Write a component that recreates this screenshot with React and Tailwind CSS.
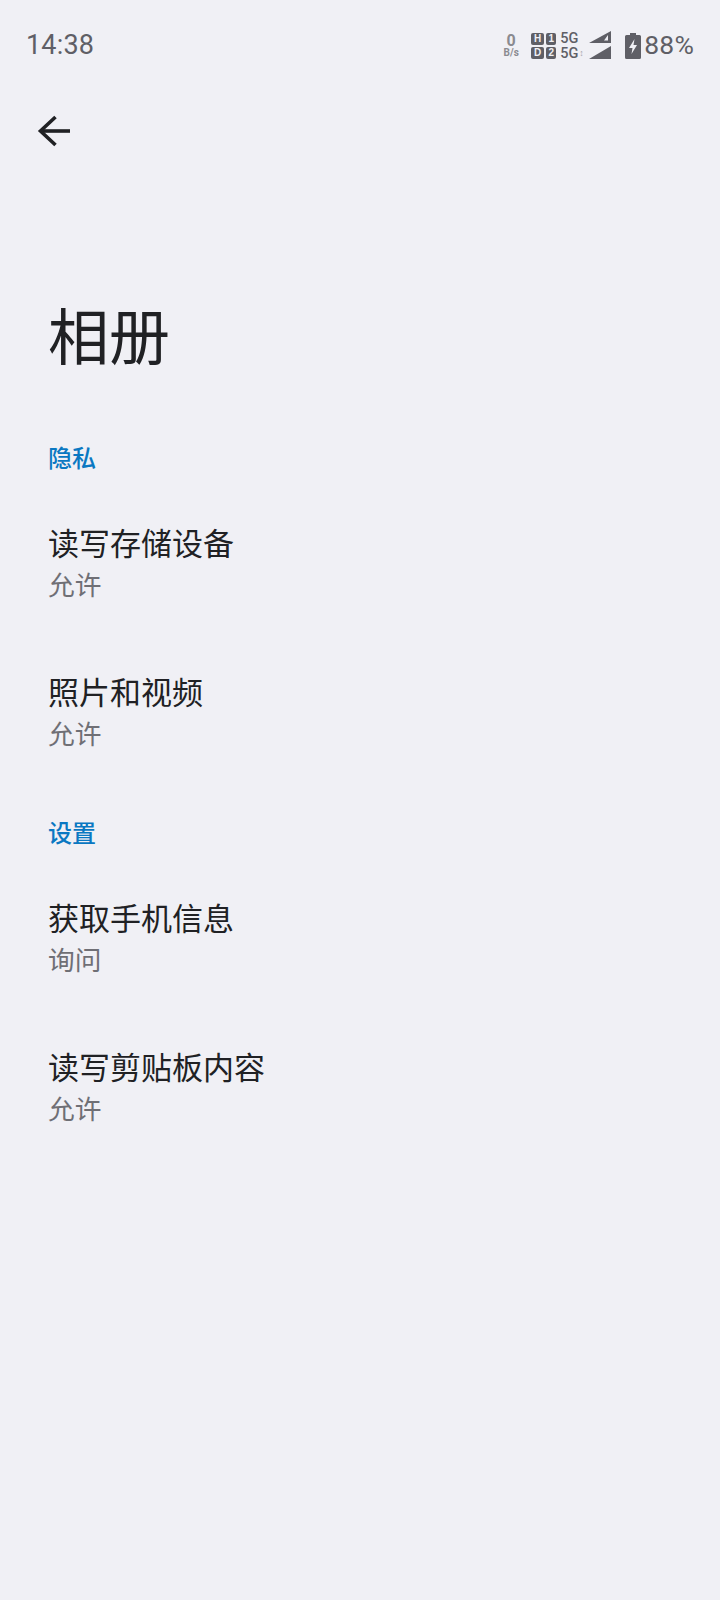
const cjk = { fontFamily: '"Noto Sans CJK SC", sans-serif' };

function Sim({ a, wide }) {
  return (
    <div className={`relative ${wide ? 'w-[13px]' : 'w-[10px]'} h-[12px] bg-[#5f5f66] rounded-[2px] flex items-center justify-center`}>
      <span className="text-[#f0f0f5] text-[10px] font-bold leading-none" style={{ fontFamily: '"Liberation Sans", sans-serif' }}>{a}</span>
    </div>
  );
}

function StatusBar() {
  return (
    <div className="h-[89px] pt-[2px] pl-[26px] pr-[26px] flex items-center justify-between text-[#5f5f66]" style={{ fontFamily: 'Roboto, sans-serif' }}>
      <span className="text-[27px] leading-none tracking-[0.2px] text-[#5f5f66]">14:38</span>
      <div className="flex items-center">
        <div className="flex flex-col items-center w-[20px] mr-[10px] leading-none">
          <span className="text-[16px] font-bold leading-[15px] text-[#8a8a90]">0</span>
          <span className="text-[10px] font-bold leading-[10px] text-[#8a8a90]">B/s</span>
        </div>
        <div className="grid grid-cols-[13px_10px] gap-[2px] mr-[4px]">
          <Sim a="H" wide /><Sim a="1" /><Sim a="D" wide /><Sim a="2" />
        </div>
        <div className="flex flex-col text-[14.5px] leading-[15px] font-medium w-[28px] mr-[1px]">
          <span>5G</span>
          <span className="flex items-center">5G<span className="text-[9px] text-[#a5a5aa] leading-none ml-[1px]">↕</span></span>
        </div>
        <svg width="24" height="30" viewBox="0 0 24 30" className="mr-[12px]" fill="#5f5f66">
          <path d="M0 12 L22 0 V12 Z M19 4 V9.5 H15 Z" fillRule="evenodd" />
          <path d="M0 28 L22 15 V28 Z" />
        </svg>
        <svg width="16" height="26" viewBox="0 0 16 26" className="mr-[3px]">
          <path d="M5 0 H11 V2 H14.5 A1.5 1.5 0 0 1 16 3.5 V24.5 A1.5 1.5 0 0 1 14.5 26 H1.5 A1.5 1.5 0 0 1 0 24.5 V3.5 A1.5 1.5 0 0 1 1.5 2 H5 Z" fill="#5f5f66" />
          <path d="M9.5 6 L4 15 H7.5 L6.5 21 L12 12 H8.5 Z" fill="#f0f0f5" />
        </svg>
        <span className="text-[26.5px] leading-none tracking-[0.2px] text-[#5f5f66]">88%</span>
      </div>
    </div>
  );
}

function Section({ children }) {
  return <div className="h-[50px] flex items-center text-[24px] font-medium leading-none text-[#0a78c2]">{children}</div>;
}

function Item({ title, sub }) {
  return (
    <div className="h-[149px] flex flex-col pt-[30px]">
      <div className="text-[31px] leading-[42px] text-[#202124]">{title}</div>
      <div className="text-[26.7px] leading-[42px] text-[#6f6f75]">{sub}</div>
    </div>
  );
}

export default function App() {
  return (
    <div className="w-[720px] h-[1600px] bg-[#f0f0f5] overflow-hidden" style={cjk}>
      <StatusBar />
      <div className="h-[84px] pl-[36px] flex items-center">
        <svg width="36" height="36" viewBox="0 0 36 36" fill="none" stroke="#202124" strokeWidth="3.6" strokeLinecap="butt">
          <path d="M34 18 H5" />
          <path d="M19.5 4 L4.5 18 L19.5 32" />
        </svg>
      </div>
      <div className="pl-[48px]">
        <h1 className="h-[124px] mt-[99px] mb-[36px] text-[61px] leading-[124px] font-normal text-[#202124]">相册</h1>
        <Section>隐私</Section>
        <div className="mt-[9px]">
          <Item title="读写存储设备" sub="允许" />
          <Item title="照片和视频" sub="允许" />
        </div>
        <div className="mt-[18px]"><Section>设置</Section></div>
        <div className="mt-[9px]">
          <Item title="获取手机信息" sub="询问" />
          <Item title="读写剪贴板内容" sub="允许" />
        </div>
      </div>
    </div>
  );
}
